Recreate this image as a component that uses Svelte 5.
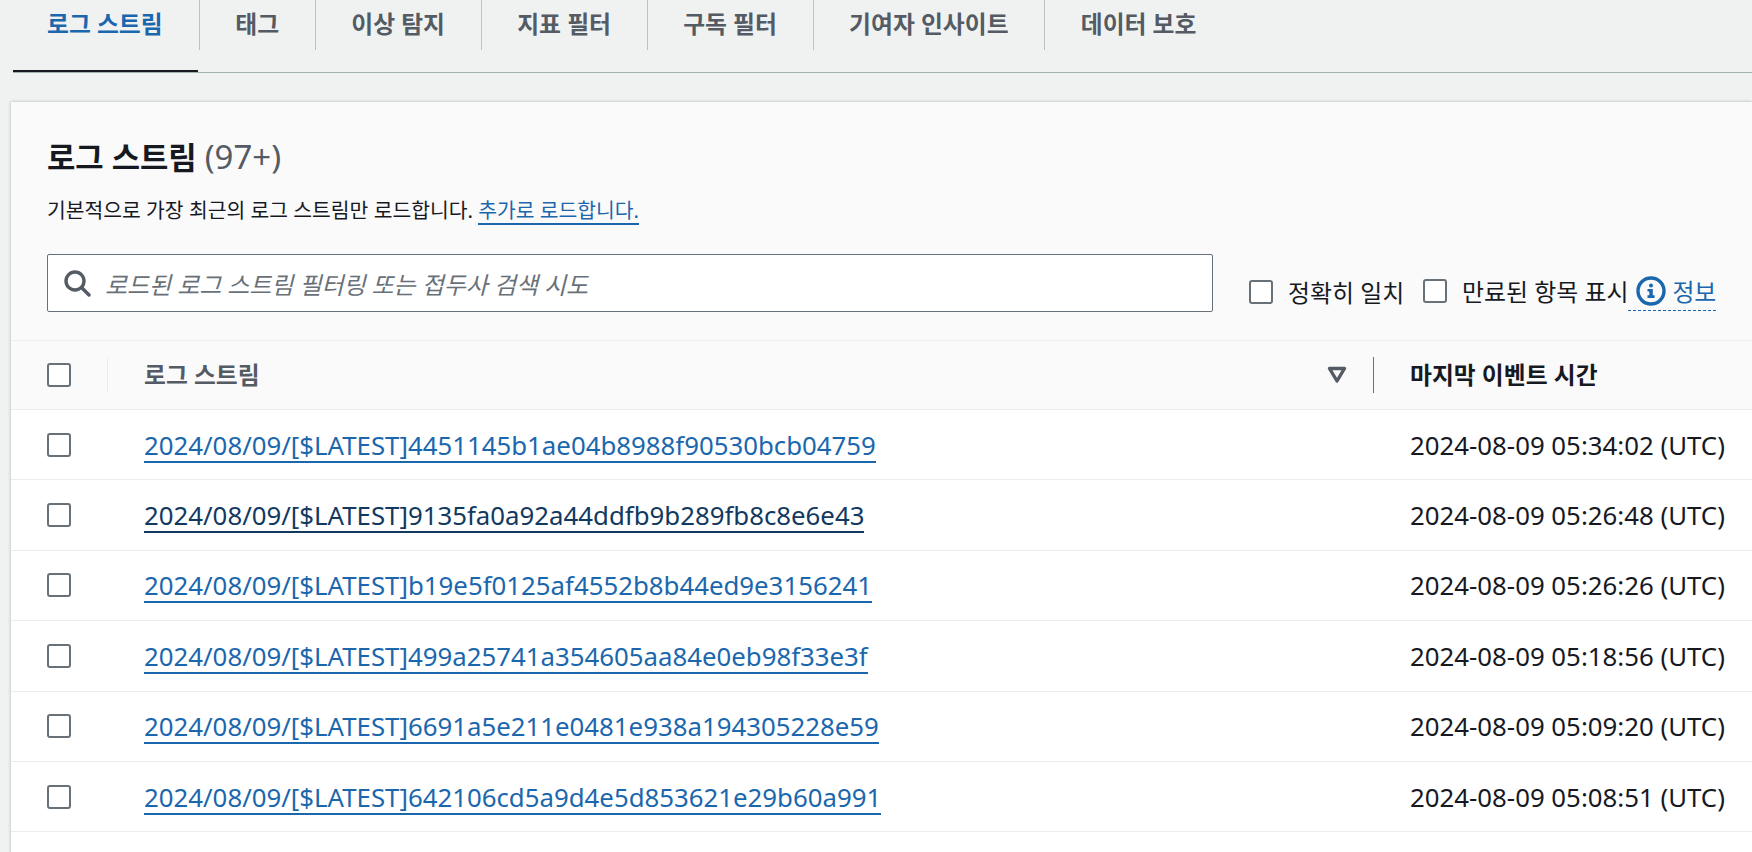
<script>
  const tabs = ['로그 스트림', '태그', '이상 탐지', '지표 필터', '구독 필터', '기여자 인사이트', '데이터 보호'];
  const rows = [
    ['2024/08/09/[$LATEST]4451145b1ae04b8988f90530bcb04759', '2024-08-09 05:34:02 (UTC)', false],
    ['2024/08/09/[$LATEST]9135fa0a92a44ddfb9b289fb8c8e6e43', '2024-08-09 05:26:48 (UTC)', true],
    ['2024/08/09/[$LATEST]b19e5f0125af4552b8b44ed9e3156241', '2024-08-09 05:26:26 (UTC)', false],
    ['2024/08/09/[$LATEST]499a25741a354605aa84e0eb98f33e3f', '2024-08-09 05:18:56 (UTC)', false],
    ['2024/08/09/[$LATEST]6691a5e211e0481e938a194305228e59', '2024-08-09 05:09:20 (UTC)', false],
    ['2024/08/09/[$LATEST]642106cd5a9d4e5d853621e29b60a991', '2024-08-09 05:08:51 (UTC)', false]
  ];
</script>

<div class="page">
  <nav class="tabs">
    {#each tabs as tab, i}
      <div class="tab" class:active={i === 0} class:last={i === tabs.length - 1}><span>{tab}</span></div>
    {/each}
  </nav>

  <section class="card">
    <header class="head">
      <h2>로그 스트림 <span class="count">(97+)</span></h2>
      <p>기본적으로 가장 최근의 로그 스트림만 로드합니다. <a href="#more">추가로 로드합니다.</a></p>
      <div class="filters">
        <div class="search">
          <svg width="28" height="28" viewBox="0 0 28 28" fill="none" stroke="#545b64" stroke-width="3.4">
            <circle cx="12" cy="12" r="9" />
            <path d="M18.5 18.5 L26 26" stroke-linecap="round" />
          </svg>
          <span>로드된 로그 스트림 필터링 또는 접두사 검색 시도</span>
        </div>
        <div class="opts">
          <span class="box"></span><span class="opt first">정확히 일치</span>
          <span class="box up"></span><span class="opt up">만료된 항목 표시</span>
          <span class="info">
            <svg width="30" height="30" viewBox="0 0 30 30">
              <circle cx="15" cy="15" r="13" fill="none" stroke="#1b67ad" stroke-width="3.4" />
              <circle cx="15" cy="9.5" r="2" fill="#1b67ad" />
              <path d="M11.5 13 H16.8 V19.3 H18.6 V22 H11.5 V19.3 H13.3 V15.6 H11.5 Z" fill="#1b67ad" />
            </svg>
            <span>정보</span>
          </span>
        </div>
      </div>
    </header>

    <div class="row th">
      <div class="c1 thc1"><span class="box"></span></div>
      <div class="c2"><b>로그 스트림</b>
        <svg class="sort" width="20" height="18" viewBox="0 0 20 18"><path d="M2.5 2.5 H17.5 L10 15 Z" fill="none" stroke="#545b64" stroke-width="3.4" stroke-linejoin="round" /></svg>
      </div>
      <div class="c3"><b>마지막 이벤트 시간</b></div>
    </div>

    {#each rows as r}
      <div class="row">
        <div class="c1"><span class="box"></span></div>
        <div class="c2"><a class="stream" class:visited={r[2]} href="#stream">{r[0]}</a></div>
        <div class="c3">{r[1]}</div>
      </div>
    {/each}
  </section>
</div>

<style>
  :global(body) { margin: 0; background: #f0f2f2; }
  .page {
    height: 852px;
    overflow: hidden;
    background: #f0f2f2;
    color: #16191f;
    font-family: "Noto Sans", "Noto Sans CJK KR", sans-serif;
  }
  .tabs {
    display: flex;
    height: 73px;
    margin-left: 13px;
    border-bottom: 1px solid #a3b1b3;
    box-sizing: border-box;
    align-items: flex-start;
  }
  .tab {
    height: 50px;
    box-sizing: border-box;
    padding: 0 35.6px 5px;
    display: flex;
    align-items: center;
    border-right: 1px solid #bcc3c5;
    font-size: 23.8px;
    font-weight: 700;
    color: #545b64;
    white-space: nowrap;
    position: relative;
  }
  .tab.last { border-right: 0; }
  .tab.active { color: #1b67ad; padding: 0 36px 5px 34px; }
  .tab.active::after {
    content: "";
    position: absolute;
    left: 0;
    right: 1px;
    top: 70px;
    height: 2px;
    background: #16191f;
  }
  .card {
    margin: 29px 0 0 11px;
    height: 760px;
    background: #fff;
    box-shadow: 0 0 3px rgba(0, 28, 36, 0.3);
  }
  .head {
    background: #fafafa;
    padding: 34px 0 0 36px;
    height: 239px;
    box-sizing: border-box;
    border-bottom: 1px solid #eaeded;
  }
  h2 { margin: 0; font-size: 30.8px; line-height: 42px; font-weight: 700; }
  .count { font-weight: 400; color: #545b64; font-size: 33px; }
  p { margin: 17px 0 0; font-size: 20.4px; line-height: 30px; color: #16191f; }
  p a { display: inline-block; line-height: 26px; color: #1b67ad; text-decoration: none; border-bottom: 2px solid #1b67ad; }
  .filters { display: flex; margin-top: 29px; }
  .search {
    width: 1166px;
    height: 58px;
    box-sizing: border-box;
    border: 1px solid #687078;
    border-radius: 2px;
    background: #fff;
    display: flex;
    align-items: center;
    padding-left: 15px;
    gap: 14px;
    font-size: 23.9px;
    font-style: italic;
    color: #687078;
    white-space: nowrap;
  }
  .opts { display: flex; align-items: center; height: 58px; padding-top: 17px; margin-left: 36px; font-size: 23.9px; white-space: nowrap; box-sizing: border-box; }
  .box {
    display: block;
    width: 24px;
    height: 24px;
    box-sizing: border-box;
    border: 2px solid #687078;
    border-radius: 3px;
    background: #fff;
    flex: none;
  }
  .opt { margin-left: 15px; }
  .opt.first { margin-right: 19px; }
  .up { position: relative; top: -1px; }
  .info {
    display: flex;
    align-items: center;
    gap: 6px;
    color: #1b67ad;
    position: relative;
    top: -1px;
    padding-left: 8px;
  }
  .info::after {
    content: "";
    position: absolute;
    left: 0;
    right: 0;
    bottom: -3px;
    border-bottom: 1px dashed #1b67ad;
  }
  .row {
    display: grid;
    grid-template-columns: 97px 1266px 1fr;
    height: 70.4px;
    box-sizing: border-box;
    border-bottom: 1px solid #eaeded;
    align-items: center;
    font-size: 25.8px;
    background: #fff;
    white-space: nowrap;
  }
  .th { background: #fafafa; height: 69px; font-size: 23.8px; }
  .c1 { padding-left: 36px; height: 36px; display: flex; align-items: center; }
  .thc1 { border-right: 1px solid #eaeded; }
  .c2 { padding-left: 36px; height: 36px; display: flex; align-items: center; position: relative; }
  .th .c2 { border-right: 1px solid #687078; }
  .th .c2 b { color: #545b64; position: relative; top: -2px; }
  .c3 { padding-left: 36px; height: 36px; display: flex; align-items: center; }
  .th .c3 b { position: relative; top: -2px; }
  .sort { position: absolute; right: 26px; top: 9px; }
  .stream { color: #1b67ad; text-decoration: none; border-bottom: 2px solid #1b67ad; line-height: 32px; margin-top: 2px; }
  .stream.visited { color: #12395f; border-color: #12395f; }
</style>
